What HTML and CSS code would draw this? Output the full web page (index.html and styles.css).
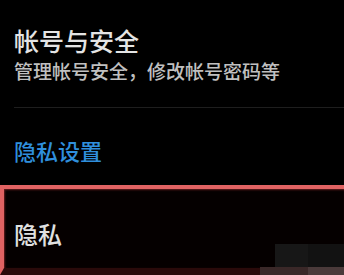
FILE: index.html
```html
<!DOCTYPE html>
<html lang="zh-CN">
<head>
<meta charset="utf-8">
<link rel="stylesheet" href="styles.css">
</head>
<body>
<div class="page">
  <div class="section">
    <div class="title">帐号与安全</div>
    <div class="subtitle">管理帐号安全，修改帐号密码等</div>
  </div>
  <div class="divider"></div>
  <div class="group-label">隐私设置</div>
  <div class="highlight">
    <div class="item">隐私</div>
  </div>
</div>
<div class="wm wm-a"></div>
<div class="wm wm-b"></div>
<div class="wm wm-c"></div>
<div class="wm wm-d"></div>
</body>
</html>
```
FILE: styles.css
```css
html, body {
  margin: 0;
  padding: 0;
  background: #000;
  overflow: hidden;
  height: 275px;
}
body {
  font-family: "Noto Sans CJK SC", "Noto Sans", sans-serif;
  position: relative;
}
.page {
  padding-top: 25px;
}
.section {
  padding-left: 14px;
}
.title {
  font-size: 25px;
  line-height: 30px;
  font-weight: 500;
  color: #e4e4e4;
}
.subtitle {
  margin-top: 4px;
  font-size: 19px;
  line-height: 24px;
  font-weight: 500;
  color: #c0c0c0;
}
.divider {
  margin-top: 24px;
  margin-left: 14px;
  height: 1px;
  background: #1e1e1e;
}
.group-label {
  margin-top: 28px;
  padding-left: 14px;
  font-size: 22px;
  line-height: 28px;
  font-weight: 500;
  color: #2f8fdc;
}
.highlight {
  margin-top: 21px;
  border-top: 4px solid #e06262;
  border-left: 4px solid #e06262;
  border-bottom: 7px solid #2a0a0a;
  box-shadow: inset 1px 1px 2px rgba(200, 60, 60, 0.5);
  background: #050000;
  padding: 30px 0 19px 10px;
}
.item {
  font-size: 24px;
  line-height: 30px;
  font-weight: 500;
  color: #e0e0e0;
}
.wm {
  position: absolute;
}
.wm-a {
  left: 275px;
  top: 244px;
  width: 33px;
  height: 23px;
  background: #171717;
}
.wm-b {
  left: 308px;
  top: 244px;
  width: 36px;
  height: 23px;
  background: #121212;
}
.wm-c {
  left: 260px;
  top: 267px;
  width: 48px;
  height: 8px;
  background: #3a2828;
}
.wm-d {
  left: 308px;
  top: 267px;
  width: 36px;
  height: 8px;
  background: #4a3a3a;
}
```
